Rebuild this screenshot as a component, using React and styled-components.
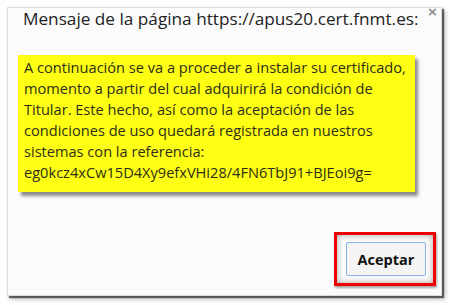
import React from "react";
import styled, { createGlobalStyle } from "styled-components";

const Global = createGlobalStyle`
  html, body { margin: 0; padding: 0; background: #ffffff; }
  body { width: 450px; height: 305px; overflow: hidden; font-family: "Open Sans", "Noto Sans", sans-serif; }
`;

const Page = styled.div`
  padding: 7px 0 0 7px;
`;

const Dialog = styled.div`
  position: relative;
  box-sizing: border-box;
  width: 435px;
  height: 289px;
  background: #fbfbfb;
  border: 1px solid #dcdcdc;
  box-shadow: 2px 2px 1px rgba(0,0,0,0.55), 3px 3px 5px rgba(0,0,0,0.3);
  display: flex;
  flex-direction: column;
`;

const Title = styled.div`
  padding: 0 0 0 15px;
  height: 31px;
  font-size: 17.2px;
  line-height: 22px;
  color: #222;
  white-space: nowrap;
`;

const Close = styled.div`
  position: absolute;
  top: -4px;
  right: 3px;
  font-size: 13px;
  font-weight: bold;
  color: #8a8a8a;
  font-family: "DejaVu Sans", sans-serif;
`;

const Message = styled.div`
  margin: 16px 0 0 10px;
  width: 397px;
  box-sizing: border-box;
  height: 137px;
  background: #ffff14;
  box-shadow: 3px 4px 3px rgba(0,0,0,0.45);
  padding: 2px 0 0 6px;
  font-size: 14.6px;
  line-height: 21px;
  color: #2e2e14;
  white-space: nowrap;
`;

const Footer = styled.div`
  margin-top: auto;
  display: flex;
  justify-content: flex-end;
  padding: 0 5px 9px 0;
`;

const Highlight = styled.div`
  box-sizing: border-box;
  width: 102px;
  height: 54px;
  border: 3px solid #f00000;
  box-shadow: 1px 2px 2px rgba(0,0,0,0.35), inset 0 0 6px rgba(0,0,0,0.35);
  display: flex;
  align-items: center;
  justify-content: center;
  padding-left: 2px;
`;

const Button = styled.button`
  box-sizing: border-box;
  width: 80px;
  height: 34px;
  border: 1px solid #86b4ec;
  border-radius: 2px;
  background: #f4f4f4;
  font-family: "Open Sans", "Noto Sans", sans-serif;
  font-weight: bold;
  font-size: 14.5px;
  color: #111;
  padding: 0;
`;

export default function App() {
  return (
    <Page>
      <Global />
      <Dialog>
        <Title>Mensaje de la página https://apus20.cert.fnmt.es:</Title>
        <Close>×</Close>
        <Message>
          A continuación se va a proceder a instalar su certificado,<br />
          momento a partir del cual adquirirá la condición de<br />
          Titular. Este hecho, así como la aceptación de las<br />
          condiciones de uso quedará registrada en nuestros<br />
          sistemas con la referencia:<br />
          eg0kcz4xCw15D4Xy9efxVHi28/4FN6TbJ91+BJEoi9g=
        </Message>
        <Footer>
          <Highlight>
            <Button>Aceptar</Button>
          </Highlight>
        </Footer>
      </Dialog>
    </Page>
  );
}
